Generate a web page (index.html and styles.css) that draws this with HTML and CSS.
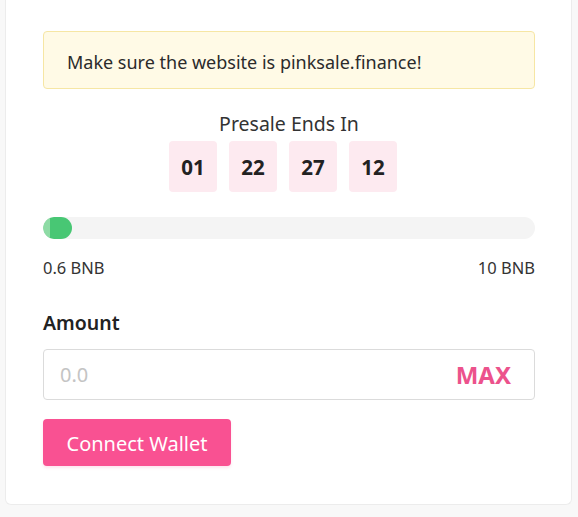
FILE: index.html
```html
<!DOCTYPE html>
<html>
<head>
<meta charset="utf-8">
<link rel="stylesheet" href="styles.css">
</head>
<body>
<div class="card">
  <div class="alert">Make sure the website is pinksale.finance!</div>
  <div class="title">Presale Ends In</div>
  <div class="timer">
    <div class="box">01</div>
    <div class="box">22</div>
    <div class="box">27</div>
    <div class="box">12</div>
  </div>
  <div class="progress"><div class="fill" style="width:29px"></div></div>
  <div class="range"><span>0.6 BNB</span><span>10 BNB</span></div>
  <div class="label">Amount</div>
  <div class="input">
    <span class="placeholder">0.0</span>
    <span class="max">MAX</span>
  </div>
  <button class="btn">Connect Wallet</button>
</div>
</body>
</html>
```
FILE: styles.css
```css
html, body {
  margin: 0;
  padding: 0;
  background: #f8f8f8;
  font-family: "Noto Sans", "Open Sans", sans-serif;
  color: #363636;
}
.card {
  box-sizing: border-box;
  width: 567px;
  margin-left: 5px;
  background: #fff;
  border: 1px solid #ececec;
  border-top: none;
  border-radius: 0 0 6px 6px;
  padding: 31px 36px 38px 37px;
}
.alert {
  box-sizing: border-box;
  height: 58px;
  background: #fffae6;
  border: 1px solid #f6e6a4;
  border-radius: 4px;
  padding: 3px 23px 0;
  display: flex;
  align-items: center;
  font-size: 18px;
  color: #2b2b2b;
}
.title {
  margin-top: 21px;
  text-align: center;
  font-size: 19.5px;
  line-height: 27px;
  color: #333;
}
.timer {
  margin-top: 4px;
  display: flex;
  justify-content: center;
  padding-right: 12px;
  gap: 12px;
}
.box {
  width: 48px;
  height: 51px;
  background: #fdeaf0;
  border-radius: 4px;
  display: flex;
  align-items: center;
  justify-content: center;
  font-weight: 700;
  font-size: 20.5px;
  color: #222;
}
.progress {
  margin-top: 25px;
  height: 22px;
  background: #f4f4f4;
  border-radius: 11px;
  overflow: hidden;
}
.fill {
  height: 100%;
  border-radius: 11px;
  background: linear-gradient(to right, #8edba5 0, #8edba5 7px, #48c774 7px);
}
.range {
  margin-top: 17px;
  display: flex;
  justify-content: space-between;
  font-size: 16.5px;
  line-height: 24px;
  color: #333;
}
.label {
  margin-top: 29px;
  font-size: 19.5px;
  line-height: 27px;
  font-weight: 600;
  color: #222;
}
.input {
  box-sizing: border-box;
  margin-top: 13px;
  height: 51px;
  border: 1px solid #dbdbdb;
  border-radius: 4px;
  display: flex;
  align-items: center;
  justify-content: space-between;
  padding: 0 23px 0 16px;
}
.placeholder {
  font-size: 20px;
  color: #c4c4c4;
}
.max {
  font-size: 24px;
  font-weight: 700;
  color: #ec528c;
}
.btn {
  display: block;
  margin-top: 19px;
  height: 47px;
  width: 188px;
  border: none;
  border-radius: 4px;
  background: #f95192;
  color: #fff;
  font-family: inherit;
  font-size: 20px;
  padding: 2px 0 0;
  box-shadow: 0 2px 3px rgba(249, 81, 146, 0.15);
}
```
